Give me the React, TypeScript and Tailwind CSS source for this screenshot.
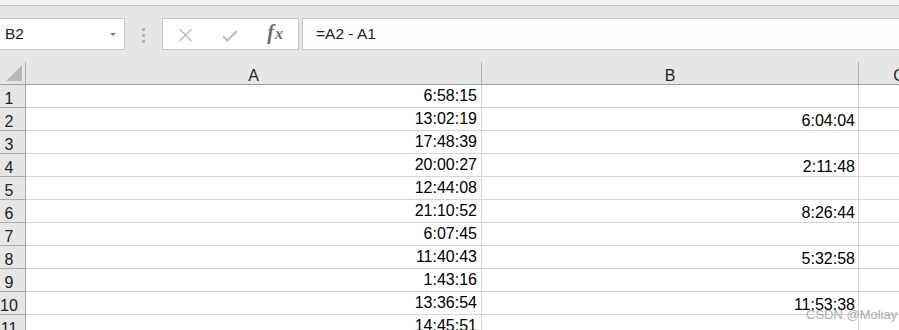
const colA = [
  "6:58:15",
  "13:02:19",
  "17:48:39",
  "20:00:27",
  "12:44:08",
  "21:10:52",
  "6:07:45",
  "11:40:43",
  "1:43:16",
  "13:36:54",
  "14:45:51",
];

const colB: Record<number, string> = {
  2: "6:04:04",
  4: "2:11:48",
  6: "8:26:44",
  8: "5:32:58",
  10: "11:53:38",
};

function FormulaBar() {
  return (
    <div className="flex h-[32px] shrink-0 items-stretch">
      {/* Name box */}
      <div className="flex w-[125px] items-center justify-between border-y border-r border-[#c6c6c6] bg-white pl-[5px] pr-[8px]">
        <span className="text-[15.5px] leading-[16px] text-[#222]">B2</span>
        <svg width="6" height="3" viewBox="0 0 6 3" className="mt-[1px]">
          <path d="M0 0H6L3 3Z" fill="#7a7a7a" />
        </svg>
      </div>

      {/* Grip dots */}
      <div className="flex w-[37px] items-center justify-center">
        <div className="flex flex-col gap-[3px] pt-[2px]">
          <div className="h-[3px] w-[3px] bg-[#b4b4b4]" />
          <div className="h-[3px] w-[3px] bg-[#b4b4b4]" />
          <div className="h-[3px] w-[3px] bg-[#b4b4b4]" />
        </div>
      </div>

      {/* Cancel / enter / fx */}
      <div className="flex w-[137px] items-center border border-[#c6c6c6] bg-white">
        <div className="flex w-[30px] justify-end">
          <svg width="15" height="14" viewBox="0 0 15 14" className="mt-[1px]">
            <path d="M1.5 1L13.5 13M13.5 1L1.5 13" stroke="#b9b9b9" strokeWidth="1.4" fill="none" />
          </svg>
        </div>
        <div className="flex w-[45px] justify-end">
          <svg width="16" height="12" viewBox="0 0 16 12" className="mt-[3px]">
            <path d="M1 6.5L5.5 10.5L15 1" stroke="#b9b9b9" strokeWidth="2" fill="none" />
          </svg>
        </div>
        <div className="flex flex-1 justify-end pr-[15px]">
          <span
            className="font-bold italic text-[#6b6b6b]"
            style={{ fontFamily: '"Liberation Serif", serif' }}
          >
            <span className="text-[20px] leading-[16px]">f</span>
            <span className="ml-[1px] text-[16px] leading-[16px]">x</span>
          </span>
        </div>
      </div>

      <div className="w-[3px]" />

      {/* Formula input */}
      <div className="flex flex-1 items-center border-y border-l border-[#c6c6c6] bg-[#fdfdfd] pl-[13px]">
        <span className="text-[15.5px] leading-[16px] text-[#222]">=A2 - A1</span>
      </div>
    </div>
  );
}

function HeaderRow() {
  return (
    <div className="flex h-[23px] shrink-0 border-b border-[#9e9e9e] bg-[#e6e6e6]">
      <div className="relative w-[26px] shrink-0 border-r border-[#ababab]">
        <svg width="16" height="16" viewBox="0 0 16 16" className="absolute left-[6px] top-[3px]">
          <path d="M0 16H16V0Z" fill="#b8b8b8" />
        </svg>
      </div>
      <div className="flex w-[456px] shrink-0 items-end justify-center border-r border-[#b0b0b0]">
        <span className="text-[16px] leading-[16px] text-[#222]">A</span>
      </div>
      <div className="flex w-[377px] shrink-0 items-end justify-center border-r border-[#b0b0b0]">
        <span className="text-[16px] leading-[16px] text-[#222]">B</span>
      </div>
      <div className="flex w-[80px] shrink-0 items-end justify-center">
        <span className="text-[16px] leading-[16px] text-[#222]">C</span>
      </div>
    </div>
  );
}

function DataRow({ n, a, b }: { n: number; a: string; b?: string }) {
  return (
    <div className="flex h-[23px] shrink-0">
      <div className="flex w-[26px] shrink-0 items-end justify-center border-b border-r border-[#ababab] bg-[#e6e6e6] pr-[7px]">
        <span className="text-[16px] leading-[16px] text-[#222]">{n}</span>
      </div>
      <div className="flex w-[456px] shrink-0 items-end justify-end border-b border-r border-[#d4d4d4] bg-white pb-[3px] pr-[4px]">
        <span className="text-[16px] leading-[16px] text-black">{a}</span>
      </div>
      <div className="flex w-[377px] shrink-0 items-end justify-end border-b border-r border-[#d4d4d4] bg-white pb-[1px] pr-[3px]">
        <span className="text-[16px] leading-[16px] text-black">{b}</span>
      </div>
      <div className="w-[80px] shrink-0 border-b border-[#d4d4d4] bg-white" />
    </div>
  );
}

export default function App() {
  return (
    <div
      className="relative flex h-[330px] w-[899px] flex-col overflow-hidden bg-[#e6e6e6]"
      style={{ fontFamily: '"Liberation Sans", Arial, sans-serif' }}
    >
      {/* Ribbon edge */}
      <div className="h-[6px] shrink-0 border-b border-[#c8c8c8] bg-[#f3f3f3]" />
      <div className="h-[12px] shrink-0" />

      <FormulaBar />

      <div className="h-[12px] shrink-0" />

      {/* Grid */}
      <div className="flex shrink-0 flex-col">
        <HeaderRow />
        {colA.map((a, i) => (
          <DataRow key={i} n={i + 1} a={a} b={colB[i + 1]} />
        ))}
      </div>

      {/* Watermark */}
      <div className="absolute left-[806px] top-[307px] text-[13px] leading-[15px] text-[#9a9a9a] opacity-80">
        CSDN @Moliay
      </div>
    </div>
  );
}
